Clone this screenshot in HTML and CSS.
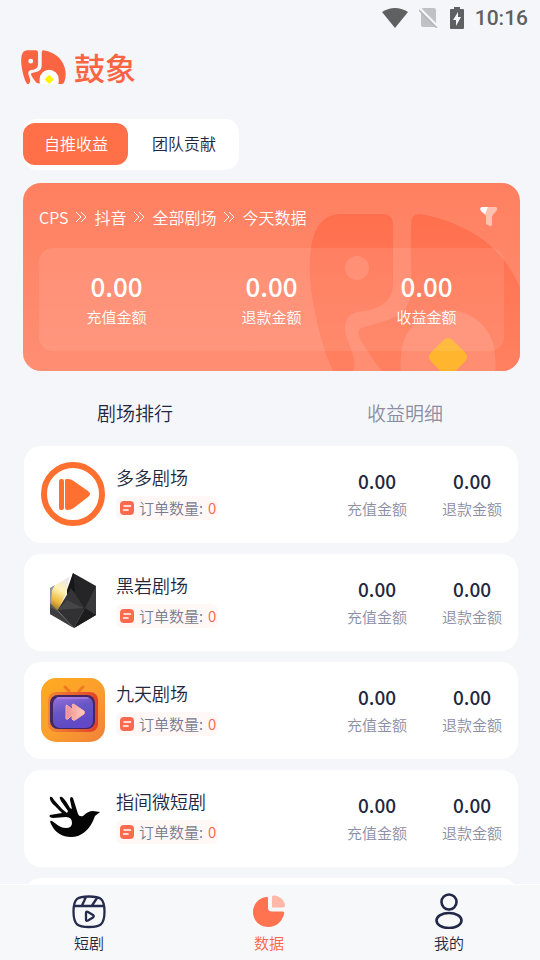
FILE: index.html
```html
<!DOCTYPE html>
<html lang="zh-CN">
<head>
<meta charset="utf-8">
<meta name="viewport" content="width=device-width, initial-scale=1">
<title>鼓象</title>
<link rel="stylesheet" href="styles.css">
</head>
<body>
<svg class="defs" width="0" height="0" aria-hidden="true">
  <defs>
    <symbol id="elephant" viewBox="0 0 222 168">
      <path fill-rule="evenodd" d="M31 1H74Q84 1 84 12V70C84 86 75 93 61 97L49 99C38 101 34 110 37 122L44 142C46 152 46 160 40 165Q36 169 29 167C17 147 11 123 6 100C1 78-1 54 2 36C5 12 15 2 31 1ZM48 43a12 12 0 1 0 0 24a12 12 0 1 0 0-24Z"/>
      <path d="M110 1C126 3 143 9 154 15C184 29 201 50 212 77C225 108 222 140 212 162Q208 168 200 168H184C187 160 187 152 186 144A47 47 0 0 0 92 144C91 152 92 160 93 165L78 163Q70 156 61 142L51 126C48 118 50 115 55 114L79 107C95 101 102 92 102 76V12Q102 1 110 1Z"/>
    </symbol>
    <symbol id="chevrons" viewBox="0 0 12 12">
      <path d="M1 1l5 5-5 5M6 1l5 5-5 5" fill="none" stroke="currentColor"/>
    </symbol>
    <symbol id="order" viewBox="0 0 14 14">
      <rect width="14" height="14" rx="4" fill="#fb6a4c"/>
      <path d="M4 5h6.500M3.500 9H8" stroke="#fff" stroke-width="1.600" stroke-linecap="round"/>
    </symbol>
    <linearGradient id="fade" x1="0" y1="0" x2="0" y2="1">
      <stop offset="0" stop-color="#ff6f4e"/><stop offset="1" stop-color="#ff8262"/>
    </linearGradient>
  </defs>
</svg>

<div class="app">
  <div class="status">
    <svg width="26" height="20" viewBox="0 0 26 20" aria-hidden="true"><path d="M0 4Q13-4 26 4L13 20Z" fill="#5f6062"/></svg>
    <svg width="20" height="20" viewBox="0 0 20 20" aria-hidden="true"><path d="M4 0H15Q17 0 17 2V19H4Q2 19 2 17V2Q2 0 4 0Z" fill="#c0c1c4"/><path d="M0 0L20 20" stroke="#f5f6fa" stroke-width="3"/><path d="M0 2L18 20" stroke="#b2b3b6" stroke-width="1.500"/></svg>
    <svg width="14" height="22" viewBox="0 0 14 22" aria-hidden="true"><path d="M4 0H10V2H13Q14 2 14 3V21Q14 22 13 22H1Q0 22 0 21V3Q0 2 1 2H4Z" fill="#5f6062"/><path d="M8 5L3 13H6V19L11 10H8Z" fill="#f5f6fa"/></svg>
    <span class="time">10:16</span>
  </div>

  <header class="brand">
    <svg width="45" height="34" viewBox="0 0 222 168" aria-hidden="true">
      <circle cx="139" cy="144" r="46" fill="#fff"/><circle cx="48" cy="55" r="13" fill="#fff"/>
      <use href="#elephant" width="222" height="168" fill="#f96543"/>
      <path d="M139 130l15 15-15 15-15-15Z" fill="#fff500" stroke="#fff500" stroke-width="12" stroke-linejoin="round"/>
    </svg>
    <h1>鼓象</h1>
  </header>

  <div class="segment">
    <button class="seg on" type="button">自推收益</button>
    <button class="seg" type="button">团队贡献</button>
  </div>

  <section class="summary">
    <svg class="mark" width="222" height="168" viewBox="0 0 222 168" aria-hidden="true">
      <circle cx="139" cy="144" r="46" fill="#ff8d72"/>
      <use href="#elephant" width="222" height="168" fill="url(#fade)"/>
      <path d="M139 131l13 13-13 13-13-13Z" fill="#ffb52d" stroke="#ffb52d" stroke-width="12" stroke-linejoin="round"/>
    </svg>
    <div class="crumbs">
      <span>CPS</span><svg width="12" height="12"><use href="#chevrons"/></svg>
      <span>抖音</span><svg width="12" height="12"><use href="#chevrons"/></svg>
      <span>全部剧场</span><svg width="12" height="12"><use href="#chevrons"/></svg>
      <span>今天数据</span>
      <button class="filter" type="button" aria-label="筛选">
        <svg width="18" height="20" viewBox="0 0 18 20"><path d="M2 0H16Q18 1 17 3L12 9V18Q11 20 8 18L6 17V9L1 4Z" fill="#ffc1b2"/><path d="M2 0H8L5 7L1 4Q-1 1 2 0Z" fill="#fff"/></svg>
      </button>
    </div>
    <dl class="totals">
      <div><dt>充值金额</dt><dd>0.00</dd></div>
      <div><dt>退款金额</dt><dd>0.00</dd></div>
      <div><dt>收益金额</dt><dd>0.00</dd></div>
    </dl>
  </section>

  <div class="tabs">
    <button class="tab on" type="button">剧场排行</button>
    <button class="tab" type="button">收益明细</button>
  </div>

  <main class="list">
    <article class="item">
      <svg class="pic" viewBox="0 0 64 64" aria-hidden="true">
        <circle cx="32" cy="32" r="29" fill="#fff" stroke="#ff6f2f" stroke-width="6"/>
        <rect x="18" y="17" width="5" height="31" rx="2" fill="#ff6f2f"/>
        <path d="M24 19Q24 16 27 17Q31 17 34 20L47 29Q51 32 47 35L34 45Q31 48 26 48Q24 48 24 45Z" fill="#ff6f2f"/>
      </svg>
      <div class="info"><h2>多多剧场</h2><p class="order"><svg width="14" height="14"><use href="#order"/></svg>订单数量: <b>0</b></p></div>
      <dl class="nums"><div><dt>充值金额</dt><dd>0.00</dd></div><div><dt>退款金额</dt><dd>0.00</dd></div></dl>
    </article>

    <article class="item">
      <svg class="pic" viewBox="0 0 64 64" aria-hidden="true">
        <defs><linearGradient id="gold" x1="0.600" y1="0" x2="0.300" y2="1"><stop offset="0" stop-color="#e8e8e8"/><stop offset=".35" stop-color="#fff3b8"/><stop offset=".7" stop-color="#f0b93c"/><stop offset="1" stop-color="#8b6a2a"/></linearGradient></defs>
        <path d="M9 18L28 7L26 22L16 42L9 36Z" fill="url(#gold)"/>
        <path d="M9 18L14 15L11 20L10 34L9 36Z" fill="#8d93a0"/>
        <path d="M32 3L55 16L53 41L45 41L26 27Z" fill="#252527"/>
        <path d="M32 3L26 20L26 27L34 21Z" fill="#171717"/>
        <path d="M30 18L44 39L16 41Z" fill="#353537"/>
        <path d="M26 30L44 39L16 41Z" fill="#464648"/>
        <path d="M16 40L44 38L33 58Z" fill="#313133"/>
        <path d="M16 40L33 58L9 44V33Z" fill="#59595b"/>
        <path d="M9 37L16 41L33 58L9 44Z" fill="#3e3e40"/>
        <path d="M44 38L55 16V45L33 58Z" fill="#39393b"/>
        <path d="M44 38L55 45L33 58Z" fill="#1c1c1d"/>
      </svg>
      <div class="info"><h2>黑岩剧场</h2><p class="order"><svg width="14" height="14"><use href="#order"/></svg>订单数量: <b>0</b></p></div>
      <dl class="nums"><div><dt>充值金额</dt><dd>0.00</dd></div><div><dt>退款金额</dt><dd>0.00</dd></div></dl>
    </article>

    <article class="item">
      <svg class="pic" viewBox="0 0 64 64" aria-hidden="true">
        <defs>
          <linearGradient id="amber" x1="0" y1="0" x2="1" y2="1"><stop offset="0" stop-color="#ffaa20"/><stop offset=".5" stop-color="#fba02c"/><stop offset="1" stop-color="#f0803a"/></linearGradient>
          <linearGradient id="tv" x1="0" y1="0" x2="1" y2="0"><stop offset="0" stop-color="#f28734"/><stop offset="1" stop-color="#e0402c"/></linearGradient>
          <linearGradient id="screen" x1="0" y1="0" x2="0.400" y2="1"><stop offset="0" stop-color="#9a70dc"/><stop offset=".5" stop-color="#6656c4"/><stop offset="1" stop-color="#6048c6"/></linearGradient>
          <linearGradient id="play"><stop offset="0" stop-color="#f08a94"/><stop offset="1" stop-color="#ffd0bb"/></linearGradient>
        </defs>
        <rect width="64" height="64" rx="15" fill="url(#amber)"/>
        <path d="M28 13L24 9M38 13L42 9" stroke="#ee7a20" stroke-width="3" stroke-linecap="round"/>
        <rect x="7" y="14" width="50" height="40" rx="8" fill="url(#tv)"/>
        <rect x="9" y="17" width="45" height="34" rx="8" fill="#45275f"/>
        <rect x="12" y="19" width="40" height="31" rx="7" fill="url(#screen)"/>
        <path d="M16 20H47" stroke="#c58cf0" stroke-linecap="round"/>
        <path d="M25 28Q25 26 27 28L32 32L31 27Q32 25 34 27L43 33Q44 34 43 36L34 42Q32 43 31 41V37L27 41Q24 42 25 38Z" fill="url(#play)" stroke="#ffb3ab"/>
      </svg>
      <div class="info"><h2>九天剧场</h2><p class="order"><svg width="14" height="14"><use href="#order"/></svg>订单数量: <b>0</b></p></div>
      <dl class="nums"><div><dt>充值金额</dt><dd>0.00</dd></div><div><dt>退款金额</dt><dd>0.00</dd></div></dl>
    </article>

    <article class="item">
      <svg class="pic" viewBox="0 0 64 64" aria-hidden="true">
        <path d="M9 11Q11 10 13 14L21 23L26 27L27 25L20 15Q17 10 21 11Q24 13 29 22L31 23L29 14Q29 9 32 12L37 28Q38 31 42 30Q47 25 52 25L59 26L54 30C51 38 47 46 37 50C26 53 15 49 10 38Q8 34 11 35C17 39 19 42 25 42Q31 42 31 37Q31 31 25 31L12 32Q7 31 9 29L21 27L14 20Q8 15 9 11Z" fill="#050505"/>
      </svg>
      <div class="info"><h2>指间微短剧</h2><p class="order"><svg width="14" height="14"><use href="#order"/></svg>订单数量: <b>0</b></p></div>
      <dl class="nums"><div><dt>充值金额</dt><dd>0.00</dd></div><div><dt>退款金额</dt><dd>0.00</dd></div></dl>
    </article>
    <article class="item empty"></article>
  </main>

  <nav class="nav">
    <a href="#drama">
      <svg width="36" height="36" viewBox="0 0 36 36" fill="none" stroke="#242b4d" stroke-width="2.300" stroke-linejoin="round" stroke-linecap="round" aria-hidden="true"><path d="M18 3.500C29 3.500 33.500 5 33.500 18.500S29 34 18 34S2.500 32 2.500 18.500S7 3.500 18 3.500ZM3 13H33M15 4L11 12.500M26 5L21 12.500"/><path d="M15 20Q15 18 17 19L22 22Q23.500 23 22 24.500L17 27.500Q15 28.500 15 26.500Z"/></svg>
      <span>短剧</span>
    </a>
    <a class="on" href="#data" aria-current="page">
      <svg width="36" height="36" viewBox="0 0 36 36" aria-hidden="true"><path d="M15 4Q17 3 17 6V15Q17 18.500 21 18.500H31Q34 18.500 33 21C31 29 25 34 17.500 34C8 34 2 27 2 19C2 11 8 5 15 4Z" fill="#ff7350"/><path d="M21 4Q21 2.500 23 2.500C28 3 33 6 34 12Q34 14.500 32 14.500H21Z" fill="#ffb7a8"/></svg>
      <span>数据</span>
    </a>
    <a href="#me">
      <svg width="36" height="36" viewBox="0 0 36 36" fill="none" stroke="#202747" stroke-width="2.600" aria-hidden="true"><circle cx="18" cy="9" r="7.500"/><ellipse cx="18" cy="27.500" rx="12.500" ry="7.500"/></svg>
      <span>我的</span>
    </a>
  </nav>
</div>
</body>
</html>
```
FILE: styles.css
```css
* { box-sizing: border-box; }

body, h1, h2, p, dl, dd { margin: 0; }

body {
  background: #f5f6fa;
  color: #22273f;
  font-family: "Noto Sans CJK SC", sans-serif;
  font-weight: 350;
}

button {
  padding: 0;
  border: 0;
  background: none;
  color: inherit;
  font: inherit;
}

svg { display: block; flex: none; }
.defs { position: absolute; }

.app {
  display: flex;
  flex-direction: column;
  height: 100vh;
  overflow: hidden;
}

.status {
  display: flex;
  align-items: center;
  justify-content: flex-end;
  gap: 11px;
  height: 36px;
  padding-right: 12px;
}
.time {
  color: #5f6062;
  font: 500 21px/36px Roboto, sans-serif;
}

.brand {
  display: flex;
  align-items: center;
  gap: 8px;
  height: 62px;
  padding-left: 21px;
}
.brand h1 {
  color: #f96543;
  font-size: 31px;
  font-weight: 500;
  line-height: 40px;
}

.segment {
  display: flex;
  align-self: flex-start;
  margin: 21px 0 0 23px;
  padding: 4px 0 5px;
  border-radius: 14px;
  background: #fff;
}
.seg {
  height: 42px;
  padding: 0 23px 2px 24px;
  border-radius: 12px;
  font-size: 16px;
}
.seg.on {
  padding: 0 20px 2px 21px;
  background: #ff7049;
  color: #fff;
}

.summary {
  position: relative;
  overflow: hidden;
  margin: 13px 20px 0 23px;
  padding: 19px 16px 20px;
  border-radius: 18px;
  background: linear-gradient(#ff8061, #ff8e73);
  color: #fff;
}
.mark {
  position: absolute;
  top: 30px;
  right: -11px;
}
.crumbs {
  position: relative;
  display: flex;
  align-items: center;
  gap: 7px;
  height: 30px;
  font-size: 16px;
}
.filter { margin: 0 6px 0 auto; }

.totals {
  position: relative;
  display: grid;
  grid-template-columns: repeat(3, 1fr);
  margin-top: 16px;
  padding: 19px 0 21px;
  border-radius: 14px;
  background: rgb(255 255 255 / 9%);
  text-align: center;
}
.totals div, .nums div {
  display: flex;
  flex-direction: column-reverse;
}
.totals dt { font-size: 15px; line-height: 26px; }
.totals dd { font-size: 26px; font-weight: 500; line-height: 37px; }

.tabs {
  display: flex;
  height: 75px;
  padding-bottom: 6px;
  align-items: center;
}
.tab { flex: 1; margin-top: 14px; color: #8b8ea3; font-size: 19px; }
.tab.on { color: #22273f; }

.list {
  display: flex;
  flex: 1;
  flex-direction: column;
  gap: 11px;
  min-height: 0;
  overflow: hidden;
  padding: 0 22px 0 24px;
}
.item {
  display: flex;
  flex: none;
  align-items: center;
  height: 97px;
  padding: 0 16px 2px 17px;
  border-radius: 17px;
  background: #fff;
}
.pic { width: 64px; height: 64px; }
.info { margin: 0 0 8px 11px; }
.info h2 { font-size: 18px; font-weight: 350; line-height: 34px; }
.order {
  display: flex;
  align-items: center;
  gap: 5px;
  width: max-content;
  height: 24px;
  margin-top: 2px;
  padding: 0 2px 0 4px;
  border-radius: 6px;
  background: #fff8f6;
  color: #777b90;
  font-size: 15px;
}
.order b { color: #f96543; font-weight: 350; }

.nums {
  display: flex;
  gap: 35px;
  margin-left: auto;
  color: #8b8ea3;
  text-align: center;
}
.nums dt { font-size: 15px; line-height: 26px; }
.nums dd { color: #22273f; font-size: 19px; font-weight: 500; line-height: 30px; }

.nav {
  display: flex;
  flex: none;
  height: 76px;
  border-top: 1px solid #fff;
  background: #f7f8fa;
}
.nav a {
  display: flex;
  flex: 1;
  flex-direction: column;
  align-items: center;
  padding: 8px 2px 0 0;
  color: #22273f;
  font-size: 15px;
  line-height: 28px;
  text-decoration: none;
}
.nav .on { color: #f96543; }
```
